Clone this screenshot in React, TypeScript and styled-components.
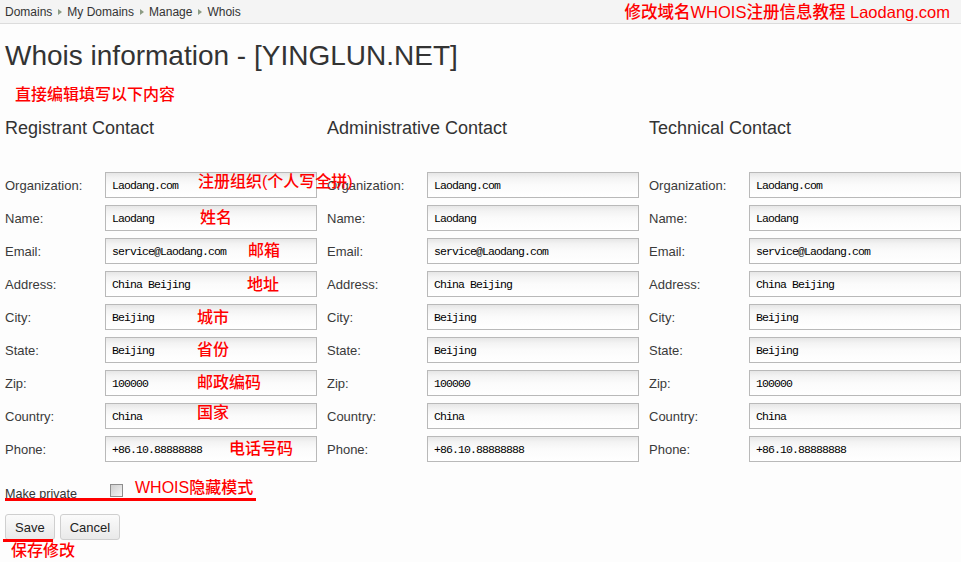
import React from "react";
import styled, { createGlobalStyle } from "styled-components";

const GlobalStyle = createGlobalStyle`
  html, body {
    margin: 0;
    padding: 0;
    background: #fdfdfd;
    overflow: hidden;
  }
  body {
    font-family: "Liberation Sans", Arial, "Noto Sans CJK SC", sans-serif;
    color: #333;
  }
`;

const RED = "#ff0000";
const CJK = `"Liberation Sans", Arial, "Noto Sans CJK SC", sans-serif`;

const Page = styled.div`
  width: 961px;
  height: 562px;
  position: relative;
`;

const Crumbs = styled.div`
  height: 23px;
  background: #f4f4f4;
  border-bottom: 1px solid #dcdcdc;
  display: flex;
  align-items: center;
  justify-content: space-between;
  padding: 0 11px 0 5px;
`;

const Trail = styled.div`
  display: flex;
  align-items: center;
  font-size: 12px;
  color: #333;
`;

const Arrow = styled.span`
  display: inline-block;
  width: 0;
  height: 0;
  border-left: 4px solid #8c9c84;
  border-top: 3px solid transparent;
  border-bottom: 3px solid transparent;
  margin: 0 5px 0 6px;
`;

const Banner = styled.div`
  font-family: ${CJK};
  font-size: 16.5px;
  font-weight: 500;
  color: ${RED};
  line-height: 20px;
  margin-top: 1px;
`;

const Main = styled.div`
  padding: 0 0 0 5px;
`;

const Title = styled.h1`
  margin: 16px 0 0;
  font-size: 28px;
  font-weight: normal;
  line-height: 32px;
  color: #333;
`;

const Hint = styled.div`
  margin: 13px 0 0 10px;
  font-family: ${CJK};
  font-size: 16px;
  font-weight: 500;
  line-height: 20px;
  color: ${RED};
`;

const Columns = styled.div`
  display: grid;
  grid-template-columns: 322px 322px 312px;
  margin-top: 13px;
`;

const Column = styled.section`
  display: flex;
  flex-direction: column;
`;

const ColumnTitle = styled.h2`
  margin: 0 0 34px;
  font-size: 18px;
  font-weight: normal;
  line-height: 20px;
  color: #333;
`;

const Fields = styled.div`
  display: flex;
  flex-direction: column;
  gap: 7px;
`;

const Row = styled.div`
  position: relative;
  display: flex;
  align-items: center;
  height: 26px;
`;

const Label = styled.label`
  width: 100px;
  flex: none;
  font-size: 13px;
  color: #3a3a3a;
`;

const Field = styled.input`
  box-sizing: border-box;
  width: 212px;
  height: 26px;
  margin: 0;
  padding: 0 0 0 6px;
  border: 1px solid #b9b9b9;
  border-radius: 0;
  background: linear-gradient(#e6e6e6 0px, #f3f3f3 5px, #fbfbfb 12px, #ffffff 100%);
  font-family: "Liberation Mono", "Courier New", monospace;
  font-size: 11.5px;
  letter-spacing: -0.9px;
  color: #000;
  outline: none;
`;

const Note = styled.span<{ $left: number; $top: number }>`
  position: absolute;
  left: ${(p) => p.$left}px;
  top: ${(p) => p.$top}px;
  z-index: 2;
  font-family: ${CJK};
  font-size: 16px;
  font-weight: 500;
  line-height: 20px;
  color: ${RED};
  white-space: nowrap;
  pointer-events: none;
`;

const PrivateRow = styled.div`
  position: relative;
  display: flex;
  align-items: flex-start;
  height: 20px;
  margin-top: 20px;
`;

const PrivateLabel = styled.label`
  width: 105px;
  flex: none;
  margin-top: 4px;
  font-size: 12.6px;
  line-height: 16px;
  color: #333;
`;

const Check = styled.input`
  appearance: none;
  box-sizing: border-box;
  width: 13px;
  height: 13px;
  margin: 2px 0 0;
  border: 1px solid #8e8e8e;
  background: linear-gradient(135deg, #cfcfcf, #f4f4f4);
`;

const Underline = styled.div<{ $left: number; $top: number; $width: number }>`
  position: absolute;
  left: ${(p) => p.$left}px;
  top: ${(p) => p.$top}px;
  width: ${(p) => p.$width}px;
  height: 3px;
  background: ${RED};
`;

const Actions = styled.div`
  position: relative;
  display: flex;
  gap: 5px;
  margin-top: 12px;
`;

const Button = styled.button`
  box-sizing: border-box;
  height: 26px;
  padding: 0 9px;
  border: 1px solid #cfcfcf;
  border-radius: 3px;
  background: linear-gradient(#fbfbfb, #e9e9e9);
  font-family: "Liberation Sans", Arial, sans-serif;
  font-size: 13px;
  color: #222;
`;

type FieldDef = { label: string; value: string };

const fields: FieldDef[] = [
  { label: "Organization:", value: "Laodang.com" },
  { label: "Name:", value: "Laodang" },
  { label: "Email:", value: "service@Laodang.com" },
  { label: "Address:", value: "China Beijing" },
  { label: "City:", value: "Beijing" },
  { label: "State:", value: "Beijing" },
  { label: "Zip:", value: "100000" },
  { label: "Country:", value: "China" },
  { label: "Phone:", value: "+86.10.88888888" },
];

// Red explanatory notes drawn over the first contact column
const notes: { text: string; left: number; top: number }[] = [
  { text: "注册组织(个人写全拼)", left: 193, top: 0 },
  { text: "姓名", left: 195, top: 3 },
  { text: "邮箱", left: 243, top: 3 },
  { text: "地址", left: 242, top: 4 },
  { text: "城市", left: 192, top: 4 },
  { text: "省份", left: 192, top: 3 },
  { text: "邮政编码", left: 192, top: 3 },
  { text: "国家", left: 192, top: 0 },
  { text: "电话号码", left: 224, top: 3 },
];

const contacts = ["Registrant Contact", "Administrative Contact", "Technical Contact"];

export default function App() {
  return (
    <Page>
      <GlobalStyle />
      <Crumbs>
        <Trail>
          Domains<Arrow />My Domains<Arrow />Manage<Arrow />Whois
        </Trail>
        <Banner>修改域名WHOIS注册信息教程 Laodang.com</Banner>
      </Crumbs>
      <Main>
        <Title>Whois information - [YINGLUN.NET]</Title>
        <Hint>直接编辑填写以下内容</Hint>
        <Columns>
          {contacts.map((c, ci) => (
            <Column key={c}>
              <ColumnTitle>{c}</ColumnTitle>
              <Fields>
                {fields.map((f, fi) => (
                  <Row key={f.label}>
                    <Label>{f.label}</Label>
                    <Field defaultValue={f.value} />
                    {ci === 0 && (
                      <Note $left={notes[fi].left} $top={notes[fi].top}>
                        {notes[fi].text}
                      </Note>
                    )}
                  </Row>
                ))}
              </Fields>
            </Column>
          ))}
        </Columns>
        <PrivateRow>
          <PrivateLabel>Make private</PrivateLabel>
          <Check type="checkbox" />
          <Note $left={130} $top={-4}>WHOIS隐藏模式</Note>
          <Underline $left={0} $top={16} $width={251} />
        </PrivateRow>
        <Actions>
          <Button>Save</Button>
          <Button>Cancel</Button>
          <Underline $left={-2} $top={25} $width={50} />
          <Note $left={6} $top={27}>保存修改</Note>
        </Actions>
      </Main>
    </Page>
  );
}
